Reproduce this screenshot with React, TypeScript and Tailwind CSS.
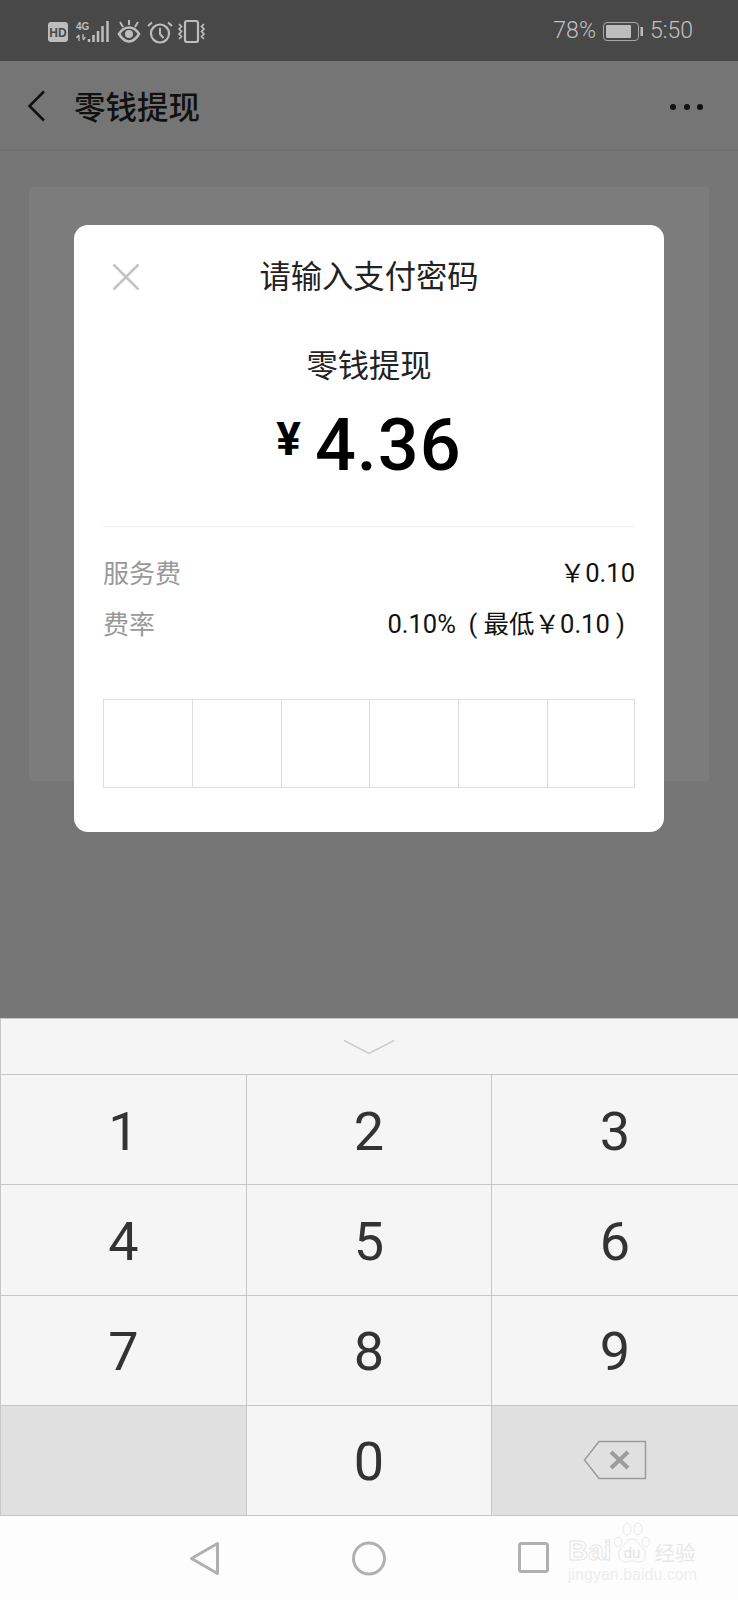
import { Fragment } from "react";

const CJK = "font-['Noto_Sans_CJK_SC','Noto_Sans',sans-serif]";

const Key = ({ label, muted, children }: { label?: string; muted?: boolean; children?: React.ReactNode }) => (
  <div className={`flex items-center justify-center border-r border-t border-[#c6c6c6] pt-[4px] font-['Roboto',sans-serif] text-[54px] leading-none text-[#333333] ${muted ? "bg-[#e0e0e0]" : "bg-[#f5f5f5]"}`}>
    {label}
    {children}
  </div>
);

const StatusIcons = () => (
  <svg width="170" height="26" viewBox="0 0 170 26" fill="none" className="ml-[48px]">
    <rect x="0" y="3" width="20" height="20" rx="3" fill="#bdbdbd" />
    <text x="10" y="18" textAnchor="middle" fontSize="12" fontWeight="700" fill="#484848" fontFamily="Liberation Sans">HD</text>
    <text x="28" y="11" fontSize="10" fontWeight="700" fill="#bdbdbd" fontFamily="Liberation Sans">4G</text>
    <path d="M31 16v6M35 15v5M28.500 19l2.500-3M37.500 18l-2.500 3" stroke="#bdbdbd" strokeWidth="1.300" />
    <path d="M41 20v3M45.500 16v7M50 12v11M54.500 7v16M59.500 2v21" stroke="#bdbdbd" strokeWidth="2.500" />
    <path d="M71 15c3-5 6-6.500 10-6.500s7 1.500 10 6.500c-3 5-6 7.500-10 7.500s-7-2.500-10-7.500Z" stroke="#bdbdbd" strokeWidth="2.500" />
    <circle cx="81" cy="15" r="4" fill="#bdbdbd" />
    <path d="M72 3l3 5M81 1v5M90 3l-3 5" stroke="#bdbdbd" strokeWidth="2" />
    <circle cx="112" cy="14.500" r="9" stroke="#bdbdbd" strokeWidth="2.200" />
    <path d="M112 9v6l3.500 4M104 3.500l-4 3.500M120 3.500l4 3.500" stroke="#bdbdbd" strokeWidth="2" />
    <rect x="137" y="2" width="13" height="21" rx="2" stroke="#bdbdbd" strokeWidth="2.200" />
    <path d="M131 5l2.500 2.500-2.500 2.500 2.500 2.500-2.500 2.500 2.500 2.500-2.500 2.500M156 5l-2.500 2.500 2.500 2.500-2.500 2.500 2.500 2.500-2.500 2.500 2.500 2.500" stroke="#bdbdbd" strokeWidth="1.700" />
  </svg>
);

export default function App() {
  return (
    <div className={`relative flex h-[1600px] w-[738px] flex-col overflow-hidden bg-[#767676] ${CJK}`}>
      <div className="flex h-[61px] shrink-0 items-center justify-between bg-[#484848] pr-[45px] pt-[2px] font-['Roboto',sans-serif] text-[23px] font-light text-[#c0c0c0]">
        <StatusIcons />
        <div className="flex items-center gap-[7px]">
          <span>78%</span>
          <svg width="40" height="19" viewBox="0 0 40 19" fill="none">
            <rect x="0.500" y="0.500" width="35" height="18" rx="3.500" stroke="#a8a8a8" />
            <rect x="3" y="3" width="25" height="13" rx="1" fill="#bdbdbd" />
            <rect x="37.500" y="5" width="2.500" height="9" fill="#bdbdbd" />
          </svg>
          <span>5:50</span>
        </div>
      </div>

      <div className="flex h-[90px] shrink-0 items-center justify-between border-b border-[#6e6e6e] bg-[#757575] pl-[27px] pr-[35px]">
        <div className="flex items-center">
          <svg width="19" height="32" viewBox="0 0 19 32" fill="none">
            <path d="M17 1.500 2.500 16 17 30.500" stroke="#111111" strokeWidth="2.500" />
          </svg>
          <span className="ml-[28px] text-[31.500px] font-medium leading-none text-[#111111]">零钱提现</span>
        </div>
        <div className="mt-[3px] flex gap-[7.500px]">
          <i className="size-[6px] rounded-full bg-[#111111]" />
          <i className="size-[6px] rounded-full bg-[#111111]" />
          <i className="size-[6px] rounded-full bg-[#111111]" />
        </div>
      </div>

      <div className="mx-[29px] mt-[36px] flex h-[594px] flex-col rounded-[3px] bg-[#7c7c7c]">
        <div className="h-[165px] border-b border-[#7a7a7a]" />
      </div>

      <div className="mt-auto grid h-[498px] shrink-0 grid-cols-[246px_245px_247px] grid-rows-[56px_repeat(4,1fr)] border-b border-l border-[#c6c6c6]">
        <div className="col-span-3 flex items-center justify-center border-r border-t border-[#c6c6c6] bg-[#f5f5f5]">
          <svg width="52" height="16" viewBox="0 0 52 16" fill="none" className="mr-[2px]">
            <path d="M1 1.500 26 14.500 51 1.500" stroke="#cccccc" strokeWidth="1.500" />
          </svg>
        </div>
        {["1", "2", "3", "4", "5", "6", "7", "8", "9"].map((n) => (
          <Fragment key={n}>
            <Key label={n} />
          </Fragment>
        ))}
        <Key muted />
        <Key label="0" />
        <Key muted>
          <svg width="64" height="40" viewBox="0 0 64 40" fill="none" className="mb-[4px]">
            <path d="M16 1.500H62.500V38.500H16L1.500 20Z" stroke="#9c9c9c" strokeWidth="1.500" />
            <path d="M28 12 45 28M45 12 28 28" stroke="#9c9c9c" strokeWidth="4" />
          </svg>
        </Key>
      </div>

      <div className="relative flex h-[84px] shrink-0 items-center bg-[#fdfdfd]">
        <svg width="738" height="40" viewBox="0 0 738 40" fill="none">
          <path d="M217.500 5.500V35.500L191.500 20.500Z" stroke="#b0b0b0" strokeWidth="3" strokeLinejoin="round" />
          <circle cx="369" cy="20.500" r="15.500" stroke="#b0b0b0" strokeWidth="3" />
          <rect x="519.500" y="5.500" width="28" height="28" rx="2" stroke="#b0b0b0" strokeWidth="3" />
        </svg>
        {/* baidu watermark sits over the nav bar */}
        <div className="absolute left-[568px] top-[6px] w-[130px] font-['Liberation_Sans',sans-serif] text-[#eeeeee]">
          <div className="flex h-[44px] items-end">
            <span className="mb-[1px] text-[28px] font-bold leading-none text-transparent [-webkit-text-stroke:1px_#e6e6e6]">Bai</span>
            <svg width="38" height="44" viewBox="0 0 38 44" fill="none" className="ml-[1px]">
              <ellipse cx="5" cy="20" rx="3.500" ry="5" stroke="#e8e8e8" />
              <ellipse cx="14" cy="7" rx="4" ry="6" stroke="#e8e8e8" />
              <ellipse cx="25" cy="7" rx="4" ry="6" stroke="#e8e8e8" />
              <ellipse cx="33" cy="20" rx="3.500" ry="5" stroke="#e8e8e8" />
              <path d="M19 17c-5 0-6 5-10 8-5 4-5 14 3 15 3 .5 5-1 7-1s5 1.500 8 1c7-1 7-11 2-15-4-3-5-8-10-8Z" stroke="#e8e8e8" />
              <text x="19" y="36" textAnchor="middle" fontSize="15" fontFamily="Liberation Sans" fill="#e4e4e4">du</text>
            </svg>
            <span className={`mb-[4px] ml-[4px] text-[20.500px] leading-none text-[#e8e8e8] ${CJK}`}>经验</span>
          </div>
          <div className="mt-[1px] text-[16px] leading-none">jingyan.baidu.com</div>
        </div>
      </div>

      {/* payment password dialog */}
      <div className="absolute left-[74px] top-[225px] flex h-[607px] w-[590px] flex-col rounded-[14px] bg-white px-[29px]">
        <div className="relative mt-[31px] flex h-[38px] items-center justify-center text-[31.300px] leading-none text-[#222222]">
          <svg width="28" height="28" viewBox="0 0 28 28" fill="none" className="absolute left-[9px] top-[7px]">
            <path d="M1.500 1.500 26.500 26.500M26.500 1.500 1.500 26.500" stroke="#c4c4c4" strokeWidth="2.500" />
          </svg>
          请输入支付密码
        </div>
        <div className="mt-[51px] text-center text-[31.300px] leading-[38px] text-[#222222]">零钱提现</div>
        <div className="mt-[28px] flex h-[70px] items-center justify-center font-['Roboto',sans-serif] font-medium leading-none text-black">
          <span className="mb-[14px] mr-[14px] text-[46px] font-bold">¥</span>
          <span className="text-[72px] tracking-[1px]">4.36</span>
        </div>
        <div className="mt-[45px] border-t border-[#eeeeee]" />
        <div className="mt-[28px] flex h-[34px] items-center justify-between text-[25.500px] leading-none">
          <span className="text-[26px] text-[#999999]">服务费</span>
          <span className="pt-[3px] font-['Roboto','Noto_Sans_CJK_SC',sans-serif] text-[#111111]">￥0.10</span>
        </div>
        <div className="mt-[17px] flex h-[34px] items-center justify-between text-[25.500px] leading-none">
          <span className="text-[26px] text-[#999999]">费率</span>
          <span className="mr-[10px] pt-[3px] font-['Roboto','Noto_Sans_CJK_SC',sans-serif] text-[#111111]">0.10%&nbsp;&nbsp;(&nbsp;最低￥0.10&nbsp;)</span>
        </div>
        <div className="mt-[59px] grid h-[89px] grid-cols-[89px_89px_88px_89px_89px_88px] border-y border-[#dddddd]">
          <div className="border-l border-[#dddddd]" />
          <div className="border-l border-[#dddddd]" />
          <div className="border-l border-[#dddddd]" />
          <div className="border-l border-[#dddddd]" />
          <div className="border-l border-[#dddddd]" />
          <div className="border-x border-[#dddddd]" />
        </div>
      </div>
    </div>
  );
}
